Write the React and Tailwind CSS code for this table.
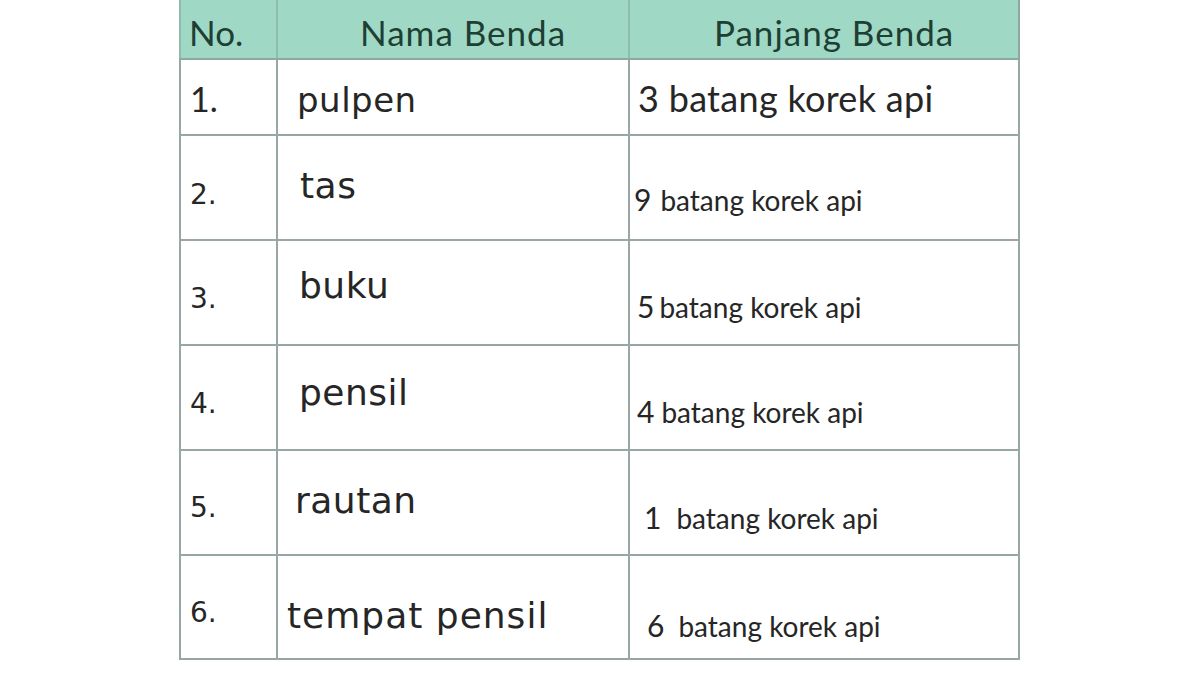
import React from "react";

const rows = [
  { no: "1.", noRounded: true, noPt: "pt-[22px]", name: "pulpen", nameCls: "pt-[23px] pl-[19px] text-[34px] tracking-[0.5px]", h: "h-[76px]", rounded: true, pPt: "pt-[20px] pl-[8px]", num: "3", gap: "mr-[10px]" },
  { no: "2.", noPt: "pt-[45px]", name: "tas", nameCls: "pt-[32px] pl-[22px] text-[36px] tracking-[0.5px]", h: "h-[105px]", pPt: "pt-[48px] pl-[4px]", num: "9", gap: "mr-[9px]" },
  { no: "3.", noPt: "pt-[44px]", name: "buku", nameCls: "pt-[27px] pl-[21px] text-[36px] tracking-[0.5px]", h: "h-[105px]", pPt: "pt-[50px] pl-[7px]", num: "5", gap: "mr-[5px]" },
  { no: "4.", noPt: "pt-[44px]", name: "pensil", nameCls: "pt-[29px] pl-[21px] text-[36px] tracking-[0.5px]", h: "h-[105px]", pPt: "pt-[50px] pl-[7px]", num: "4", gap: "mr-[7px]" },
  { no: "5.", noPt: "pt-[43px]", name: "rautan", nameCls: "pt-[32px] pl-[17px] text-[36px] tracking-[0.5px]", h: "h-[105px]", pPt: "pt-[51px] pl-[14px]", num: "1", gap: "mr-[15px]" },
  { no: "6.", noPt: "pt-[43px]", name: "tempat pensil", nameCls: "pt-[42px] pl-[9px] text-[36px] tracking-[1px]", h: "h-[104px]", pPt: "pt-[54px] pl-[17px]", num: "6", gap: "mr-[14px]" },
];

export default function App() {
  return (
    <div className="w-[1200px] h-[675px] bg-white overflow-hidden">
      <div className="ml-[179px] w-[841px] flex flex-col">
        {/* header */}
        <div className="grid grid-cols-[99px_352px_390px] h-[60px] bg-[#a0d8c6] border-b-2 border-[#8aa9a2] text-[#1d3f34] font-['Lato',sans-serif] text-[35px] leading-none">
          <div className="border-l-2 border-r-2 border-[#8fbcae] pt-[15px] pl-[8px]">No.</div>
          <div className="border-r-2 border-[#8fbcae] pt-[15px] pl-[82px] tracking-[1px]">Nama Benda</div>
          <div className="border-r-2 border-[#8aa9a2] pt-[15px] pl-[84px] tracking-[1px]">Panjang Benda</div>
        </div>
        {rows.map((r, i) => (
          <div
            key={i}
            className={`grid grid-cols-[99px_352px_390px] ${r.h} border-b-2 border-[#98a7a5] text-[#262626] leading-none`}
          >
            <div className={`border-l-2 border-r-2 border-[#98a7a5] pl-[9px] ${r.noPt}`}>
              {r.noRounded ? (
                <span className="font-['Lato',sans-serif] text-[34px]">{r.no}</span>
              ) : (
                <span className="font-['DejaVu_Sans',sans-serif] text-[28px]">{r.no}</span>
              )}
            </div>
            <div className={`border-r-2 border-[#98a7a5] font-['DejaVu_Sans',sans-serif] ${r.nameCls}`}>
              {r.name}
            </div>
            <div className={`border-r-2 border-[#98a7a5] ${r.pPt}`}>
              {r.rounded ? (
                <span className="font-['Lato',sans-serif] text-[36px] tracking-[0.3px]">3 batang korek api</span>
              ) : (
                <div className="flex items-baseline font-['Lato',sans-serif]">
                  <span className={`text-[30px] ${r.gap}`}>{r.num}</span>
                  <span className="text-[28px]">batang korek api</span>
                </div>
              )}
            </div>
          </div>
        ))}
      </div>
    </div>
  );
}
